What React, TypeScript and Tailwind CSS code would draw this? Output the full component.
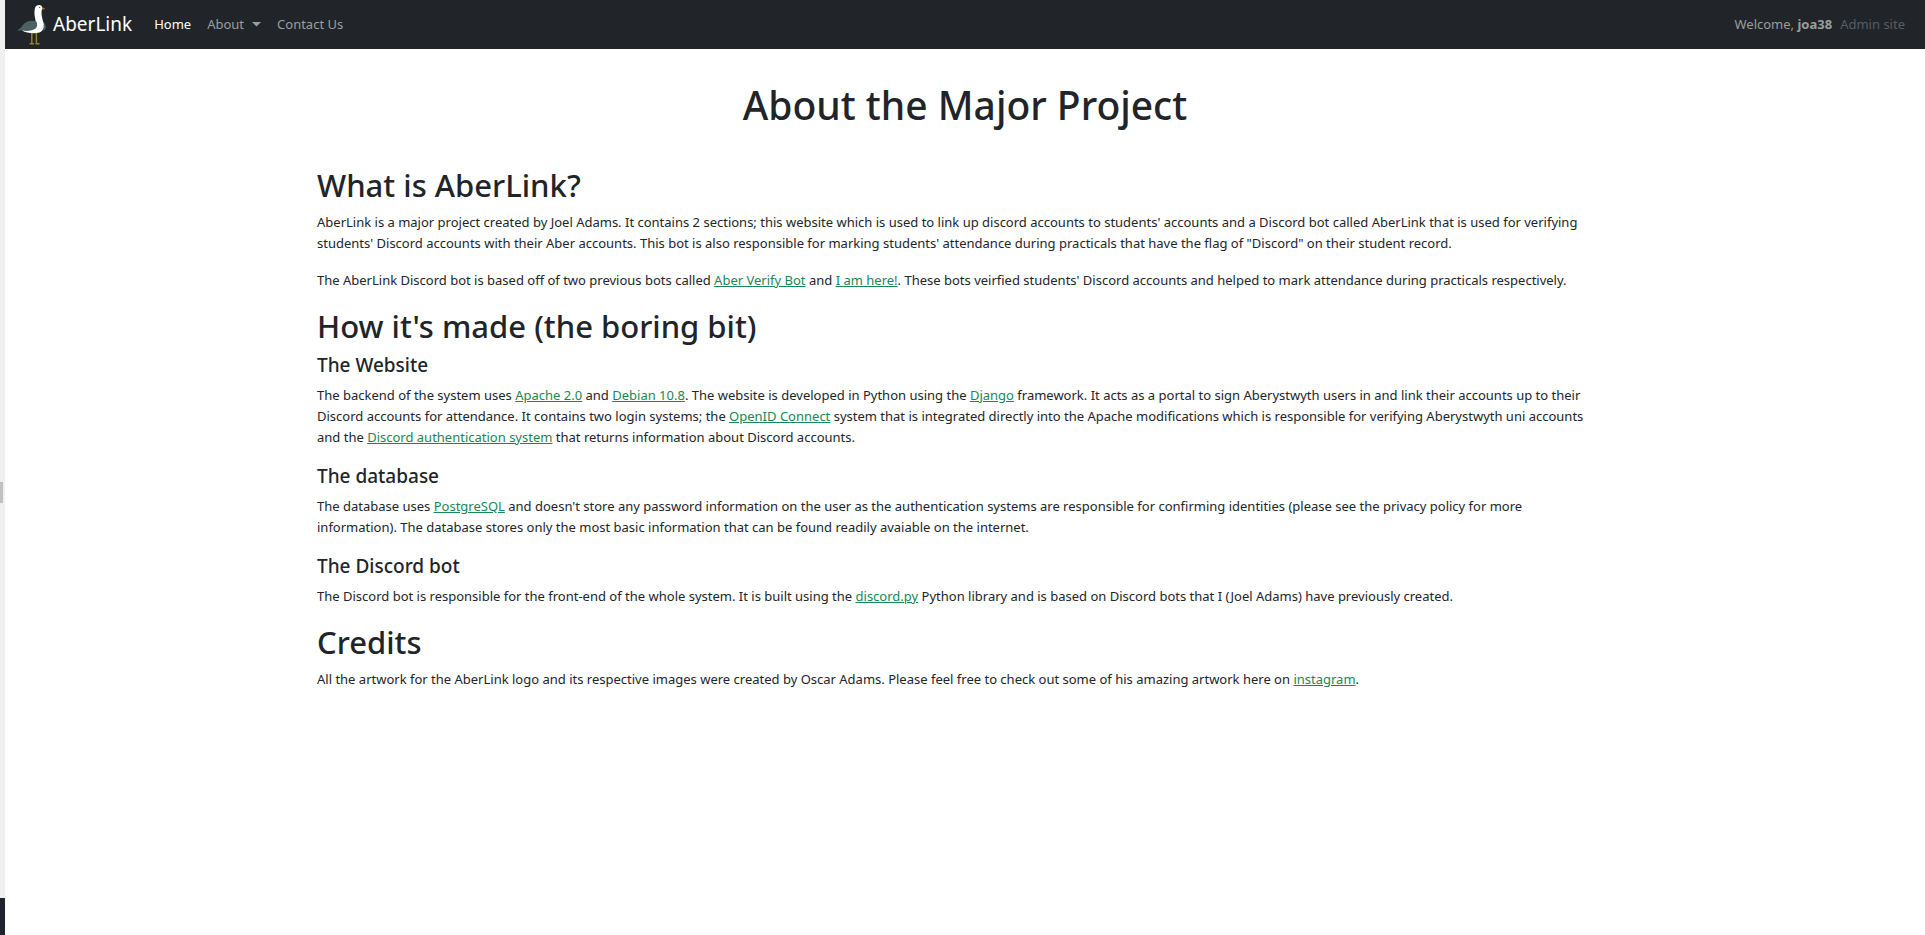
import type { ReactNode } from "react";

function GullLogo() {
  return (
    <svg viewBox="0 0 30 42" className="h-[42px] w-[30px] shrink-0" aria-hidden="true">
      <path d="M21.5 3.6 C24 2.8 27 3.2 28.3 4.8 C26.5 5.8 23.5 6 22 5.8 Z" fill="#94762b" />
      <path d="M14.8 28 V39.6 M12.6 39.8 H17 M19.4 28 V39.6 M18.4 39.8 H22.6" stroke="#9a7f26" strokeWidth="1.5" fill="none" />
      <path d="M26 18 C29 20 29.8 24 27.5 26 L24 27 Z" fill="#4c6163" />
      <path
        d="M18 4.2 C18.5 1.2 22.5 0.2 24.4 1.8 C25.6 2.8 25.4 5.4 24.6 7 C24 10 25.4 15 26.4 18.6 C27.4 23 26.4 27 22.5 28.6 C17.5 30 9 29.2 5.2 26.6 L8 24 L17.8 24 C19.6 20 18.4 16 17.7 12 C17.3 9 17.4 6.4 18 4.2 Z"
        fill="#ffffff"
      />
      <path
        d="M0.4 26 C3 25.2 4.8 22.6 6.4 20.6 C9 17 14 16 19.4 17.4 C20.8 20.6 20.2 23.8 17.4 25.2 C13.4 27.2 8 27.4 4.6 26 C3 26.8 1.4 26.8 0.4 26 Z"
        fill="#4c6163"
      />
      <circle cx="22.6" cy="3.4" r="0.6" fill="#5b5b5b" />
    </svg>
  );
}

function TextLink({ children }: { children: ReactNode }) {
  return (
    <a href="#" className="text-[#198754] underline">
      {children}
    </a>
  );
}

function Heading({ children }: { children: ReactNode }) {
  return <h2 className="mb-2 text-[31px] leading-[38px] font-medium">{children}</h2>;
}

function SubHeading({ children }: { children: ReactNode }) {
  return <h3 className="mb-2 text-[19px] leading-6 font-medium">{children}</h3>;
}

function Paragraph({ children }: { children: ReactNode }) {
  return <p className="mb-4 pr-4">{children}</p>;
}

function EdgeStrip() {
  return (
    <div className="flex w-[5px] shrink-0 flex-col bg-[#f0f0f0]" aria-hidden="true">
      <div className="grow-[55]" />
      <div className="h-[21px] w-[3px] bg-[#c1c1c1]" />
      <div className="grow-[45]" />
      <div className="h-[37px] bg-[#1f242c]" />
    </div>
  );
}

function NavBar() {
  return (
    <nav className="flex h-[49px] items-center bg-[#212529] pr-5 pl-3 text-[#9b9d9e]">
      <a href="#" className="flex items-center gap-[6px] text-[19px] text-white">
        <GullLogo />
        AberLink
      </a>
      <div className="ml-[22px] flex grow items-center gap-4">
        <a href="#" className="text-white">
          Home
        </a>
        <button type="button" className="flex items-center gap-2">
          About
          <svg viewBox="0 0 9 5" className="h-[5px] w-[9px]" aria-hidden="true">
            <path d="M0 0 H9 L4.5 4.5 Z" fill="currentColor" />
          </svg>
        </button>
        <a href="#">Contact Us</a>
      </div>
      <span>
        Welcome, <strong className="font-bold">joa38</strong>
      </span>
      <a href="#" className="ml-2 text-[#595c5f]">
        Admin site
      </a>
    </nav>
  );
}

export default function App() {
  return (
    <div className="flex min-h-screen bg-white font-['Noto_Sans',sans-serif] text-[13px] leading-[21px] text-[#212529]">
      <EdgeStrip />
      <div className="min-w-0 grow">
        <NavBar />
        <main className="mx-auto max-w-[1320px] px-3 pt-8">
          <h1 className="mb-[37px] text-center text-[39px] leading-[48px] font-medium">About the Major Project</h1>

          <Heading>What is AberLink?</Heading>
          <Paragraph>
            AberLink is a major project created by Joel Adams. It contains 2 sections; this website which is used to link up discord
            accounts to students' accounts and a Discord bot called AberLink that is used for verifying students' Discord accounts with
            their Aber accounts. This bot is also responsible for marking students' attendance during practicals that have the flag of
            "Discord" on their student record.
          </Paragraph>
          <Paragraph>
            The AberLink Discord bot is based off of two previous bots called <TextLink>Aber Verify Bot</TextLink> and{" "}
            <TextLink>I am here!</TextLink>. These bots veirfied students' Discord accounts and helped to mark attendance during
            practicals respectively.
          </Paragraph>

          <Heading>How it's made (the boring bit)</Heading>
          <SubHeading>The Website</SubHeading>
          <Paragraph>
            The backend of the system uses <TextLink>Apache 2.0</TextLink> and <TextLink>Debian 10.8</TextLink>. The website is
            developed in Python using the <TextLink>Django</TextLink> framework. It acts as a portal to sign Aberystwyth users in and
            link their accounts up to their Discord accounts for attendance. It contains two login systems; the{" "}
            <TextLink>OpenID Connect</TextLink> system that is integrated directly into the Apache modifications which is responsible
            for verifying Aberystwyth uni accounts and the <TextLink>Discord authentication system</TextLink> that returns information
            about Discord accounts.
          </Paragraph>
          <SubHeading>The database</SubHeading>
          <Paragraph>
            The database uses <TextLink>PostgreSQL</TextLink> and doesn't store any password information on the user as the
            authentication systems are responsible for confirming identities (please see the privacy policy for more information). The
            database stores only the most basic information that can be found readily avaiable on the internet.
          </Paragraph>
          <SubHeading>The Discord bot</SubHeading>
          <Paragraph>
            The Discord bot is responsible for the front-end of the whole system. It is built using the <TextLink>discord.py</TextLink>{" "}
            Python library and is based on Discord bots that I (Joel Adams) have previously created.
          </Paragraph>

          <Heading>Credits</Heading>
          <Paragraph>
            All the artwork for the AberLink logo and its respective images were created by Oscar Adams. Please feel free to check out
            some of his amazing artwork here on <TextLink>instagram</TextLink>.
          </Paragraph>
        </main>
      </div>
    </div>
  );
}
